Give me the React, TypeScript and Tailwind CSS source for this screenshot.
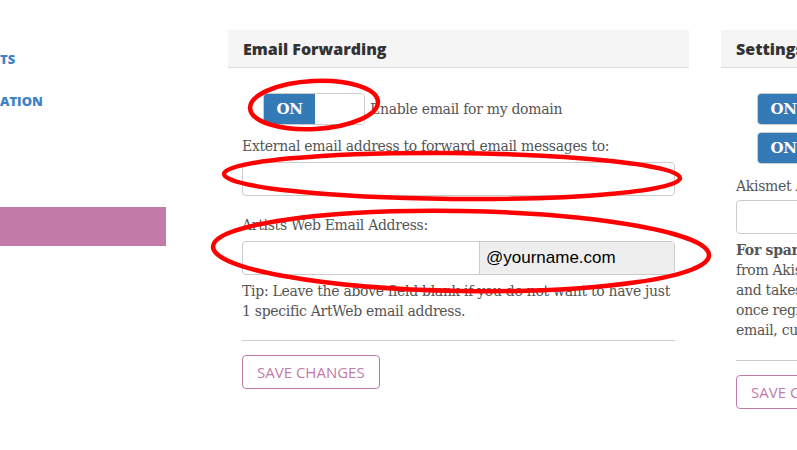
import React from 'react';

const serif = "font-['DejaVu_Serif',serif] tracking-[-0.3px]";
const head = "font-['Open_Sans',sans-serif]";

const Toggle: React.FC = () => (
  <div className="flex h-[32px] w-[102px] overflow-hidden rounded border border-[#ccc]">
    <div className={`flex w-[51px] items-center justify-center bg-[#337ab7] text-[15px] font-bold text-white ${serif}`}>ON</div>
    <div className="flex-1 bg-white" />
  </div>
);

const App: React.FC = () => {
  return (
    <div className="relative h-[450px] w-[797px] overflow-hidden bg-white">
      <div className="flex">
        {/* Sidebar */}
        <div className="w-[166px] shrink-0">
          <div className={`mt-[50px] text-[13px] font-extrabold text-[#3d83c6] ${head}`}>TS</div>
          <div className={`mt-[22px] text-[13px] font-extrabold text-[#3d83c6] ${head}`}>ATION</div>
          <div className="mt-[96px] h-[39px] bg-[#c27ba9]" />
        </div>

        {/* Email Forwarding */}
        <div className="ml-[62px] mt-[30px] w-[461px] shrink-0">
          <div className={`flex h-[38px] items-center border-b border-[#ddd] bg-[#f5f5f5] px-[15px] text-[16px] font-extrabold text-[#333] ${head}`}>
            Email Forwarding
          </div>
          <div className={`px-[14px] text-[14px] text-[#555] ${serif}`}>
            <div className="mt-[25px] flex items-center gap-[5px] pl-[21px]">
              <Toggle />
              <span>Enable email for my domain</span>
            </div>
            <div className="mt-[11px]">External email address to forward email messages to:</div>
            <div className="mt-[5px] h-[34px] rounded border border-[#ccc]" />
            <div className="mt-[19px]">Artists Web Email Address:</div>
            <div className="mt-[5px] flex h-[34px] rounded border border-[#ccc]">
              <div className="w-[236px]" />
              <div className="flex flex-1 items-center border-l border-[#ccc] bg-[#eee] px-[6px] font-['Liberation_Sans',sans-serif] text-[17px] tracking-normal text-black">
                @yourname.com
              </div>
            </div>
            <div className="mt-[6px] leading-[20px]">
              Tip: Leave the above field blank if you do not want to have just 1 specific ArtWeb email address.
            </div>
            <div className="mt-[19px] border-t border-[#ccc]" />
            <button className={`mt-[14px] h-[34px] rounded border border-[#c27ba9] px-[14px] text-[15px] tracking-normal text-[#c27ba9] ${head}`}>
              SAVE CHANGES
            </button>
          </div>
        </div>

        {/* Settings */}
        <div className="ml-[32px] mt-[30px] w-[461px] shrink-0">
          <div className={`flex h-[38px] items-center border-b border-[#ddd] bg-[#f5f5f5] px-[15px] text-[16px] font-extrabold text-[#333] ${head}`}>
            Settings
          </div>
          <div className={`px-[15px] text-[14px] text-[#555] ${serif}`}>
            <div className="mt-[25px] flex flex-col gap-[7px] pl-[21px]">
              <Toggle />
              <Toggle />
            </div>
            <div className="mt-[12px]">Akismet API Key:</div>
            <div className="mt-[3px] h-[34px] rounded border border-[#ccc]" />
            <div className="mt-[6px] leading-[20px]">
              <b>For spam protection</b> get a free API key
              <br />
              from Akismet. It only takes a few minutes
              <br />
              and takes care of comment spam for you
              <br />
              once registered you will get your key by
              <br />
              email, currently.
            </div>
            <div className="mt-[20px] border-t border-[#ccc]" />
            <button className={`mt-[14px] h-[34px] rounded border border-[#c27ba9] px-[14px] text-[15px] tracking-normal text-[#c27ba9] ${head}`}>
              SAVE CHANGES
            </button>
          </div>
        </div>
      </div>

      {/* Red annotation marks */}
      <svg className="pointer-events-none absolute left-0 top-0" width="797" height="450">
        <g fill="none" stroke="#f00" strokeWidth="4.5">
          <ellipse cx="314" cy="105" rx="64" ry="24" transform="rotate(-3 314 105)" />
          <ellipse cx="452" cy="176" rx="228" ry="23" transform="rotate(0.5 452 176)" />
          <ellipse cx="461" cy="251" rx="248" ry="40" transform="rotate(1 461 251)" />
        </g>
      </svg>
    </div>
  );
};

export default App;
